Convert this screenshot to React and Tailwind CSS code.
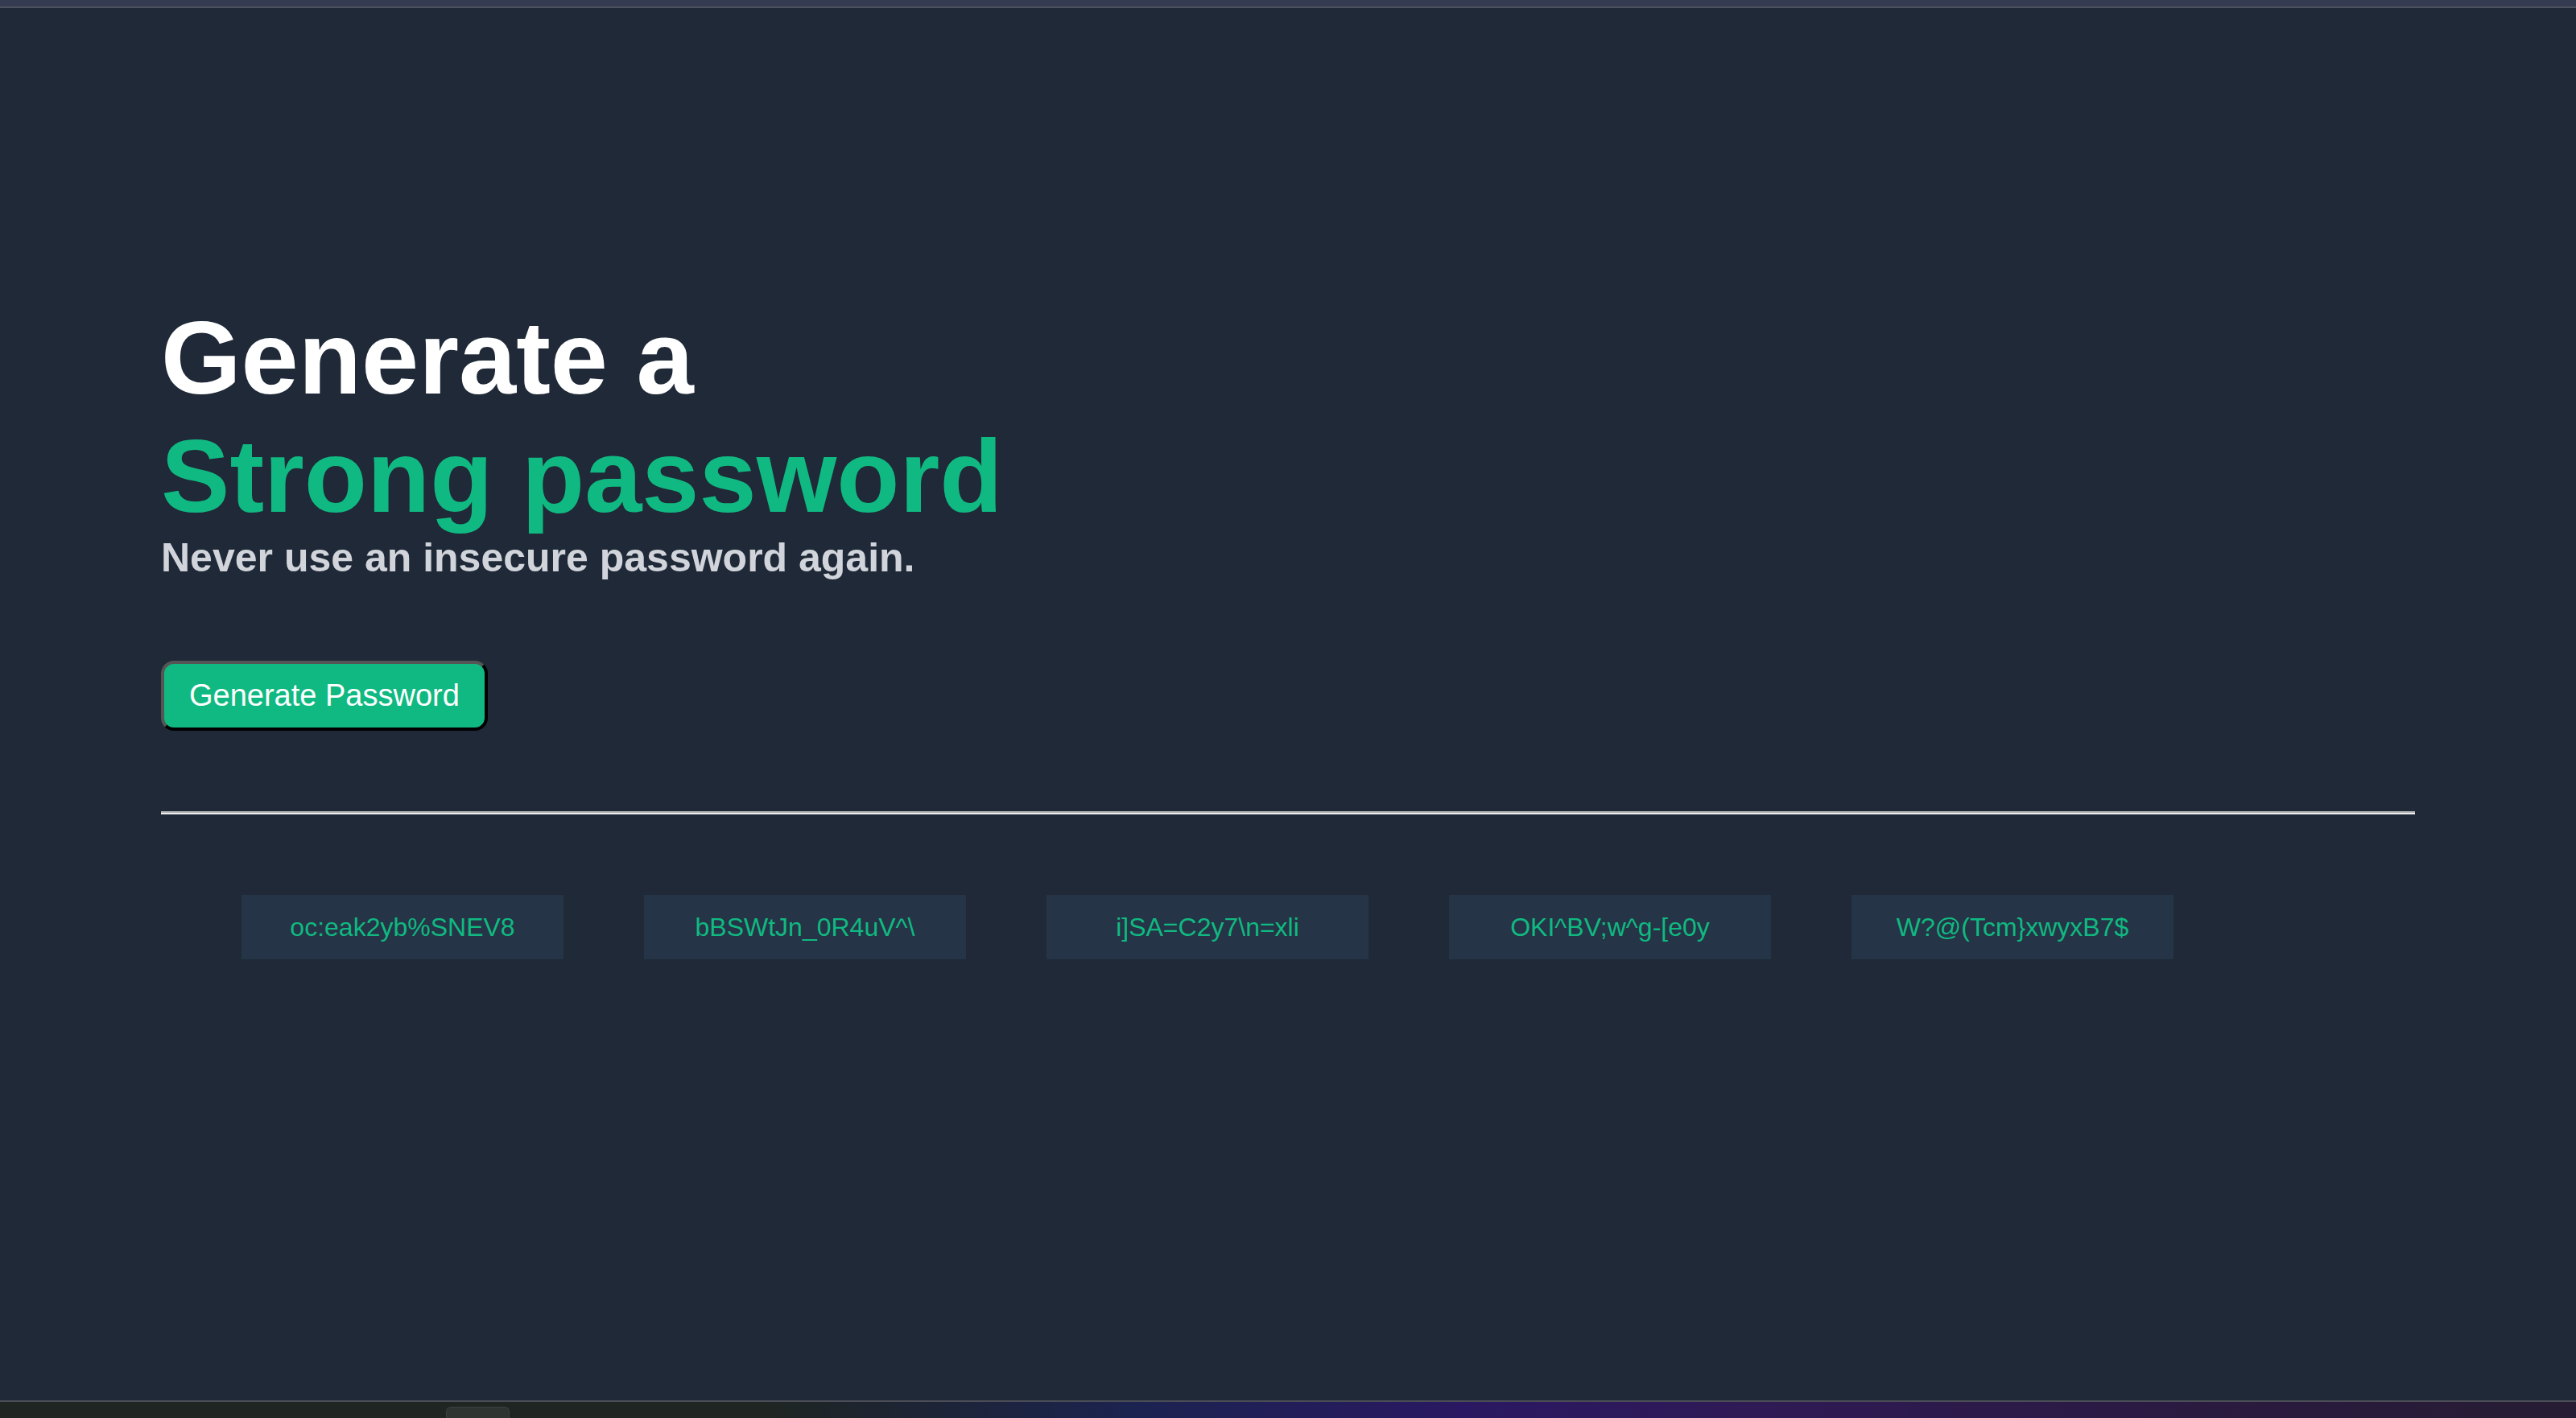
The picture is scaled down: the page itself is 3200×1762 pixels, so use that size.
import React from 'react';

const passwords = [
  'oc:eak2yb%SNEV8',
  'bBSWtJn_0R4uV^\\',
  'i]SA=C2y7\\n=xli',
  'OKI^BV;w^g-[e0y',
  'W?@(Tcm}xwyxB7$',
];

const App = () => {
  return (
    <div className="flex h-[1762px] w-[3200px] flex-col overflow-hidden bg-[#1f2937] font-['Liberation_Sans',Arial,sans-serif]">
      {/* window chrome top */}
      <div className="h-[8px] bg-[#353b50]"></div>
      <div className="h-[2px] bg-[#4d5260]"></div>

      <main className="flex-1 px-[200px] pt-[361px]">
        <h1 className="text-[128px] font-bold leading-[1.15] text-white">
          Generate a
          <br />
          <span className="text-[#10b981]">Strong password</span>
        </h1>
        <p className="text-[50px] font-bold leading-[1.15] text-[#d1d5db]">
          Never use an insecure password again.
        </p>

        <button className="mt-[98px] flex h-[87px] items-center rounded-[16px] border-4 border-t-[#555555] border-l-[#555555] border-r-black border-b-black bg-[#10b981] px-[31px] text-[38px] leading-[1.15] text-white">
          Generate Password
        </button>

        <div className="mt-[100px] h-[4px] border-t-2 border-b-2 border-t-[#b4b4b4] border-b-[#ececec]"></div>

        <div className="mt-[100px] flex gap-[100px] pl-[100px]">
          {passwords.map((pw) => (
            <div
              key={pw}
              className="flex h-[80px] w-[400px] items-center justify-center bg-[#253446] text-[32px] text-[#10b981]"
            >
              {pw}
            </div>
          ))}
        </div>
      </main>

      {/* window chrome bottom */}
      <div className="h-[2px] bg-[#4a4d56]"></div>
      <div className="flex h-[20px] items-end bg-[linear-gradient(to_right,#1e2523_0%,#1e2523_30%,#1b2350_44%,#2a1862_57%,#2f1a55_68%,#2a1a40_85%,#261c33_100%)] pl-[554px]">
        <div className="h-[14px] w-[79px] rounded-t-[6px] border border-b-0 border-[#3a403d] bg-[#2d3431]"></div>
      </div>
    </div>
  );
};

export default App;
